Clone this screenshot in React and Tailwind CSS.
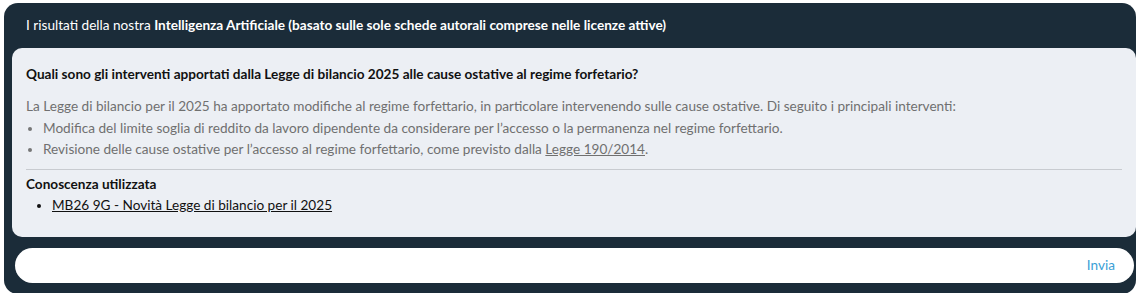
export default function App() {
  const font = { fontFamily: "Lato, 'Open Sans', sans-serif" };
  return (
    <div className="h-[293px] w-[1137px] bg-white pl-1 pt-[3px]" style={font}>
      <div className="flex h-[291px] w-[1132px] flex-col rounded-[14px] bg-[#1b2c39] pl-2 pr-0">
        <div className="flex h-[45px] items-center pl-[14px] text-[13.6px] text-white">
          <span>
            I risultati della nostra{" "}
            <b className="font-bold">
              Intelligenza Artificiale (basato sulle sole schede autorali comprese nelle licenze attive)
            </b>
          </span>
        </div>
        <div className="rounded-[10px] bg-[#eceff4] px-[14px] pb-[22px] pt-[15px] text-[13.6px]">
          <div className="font-bold leading-[22px] text-[#111]">
            Quali sono gli interventi apportati dalla Legge di bilancio 2025 alle cause ostative al regime forfetario?
          </div>
          <div className="mt-[11px] leading-[21.5px] text-[#707070]">
            <p>
              La Legge di bilancio per il 2025 ha apportato modifiche al regime forfettario, in particolare intervenendo sulle cause ostative. Di seguito i principali interventi:
            </p>
            <ul className="list-disc pl-[17px] marker:text-[#777]">
              <li>
                Modifica del limite soglia di reddito da lavoro dipendente da considerare per l’accesso o la permanenza nel regime forfettario.
              </li>
              <li>
                Revisione delle cause ostative per l’accesso al regime forfettario, come previsto dalla{" "}
                <span className="underline">Legge 190/2014</span>.
              </li>
            </ul>
          </div>
          <div className="mt-[8px] border-t border-[#c8cbd0] pt-[3px]">
            <div className="font-bold leading-[22px] text-[#111]">Conoscenza utilizzata</div>
            <ul className="list-disc pl-[26px] text-[#111]">
              <li className="leading-[20px]">
                <span className="underline">MB26 9G - Novità Legge di bilancio per il 2025</span>
              </li>
            </ul>
          </div>
        </div>
        <div className="mt-[11px] ml-[3px] mr-[2px] flex h-[35px] items-center justify-end rounded-full bg-white pr-[19px]">
          <span className="text-[13.6px] text-[#3a9fd6]">Invia</span>
        </div>
      </div>
    </div>
  );
}
